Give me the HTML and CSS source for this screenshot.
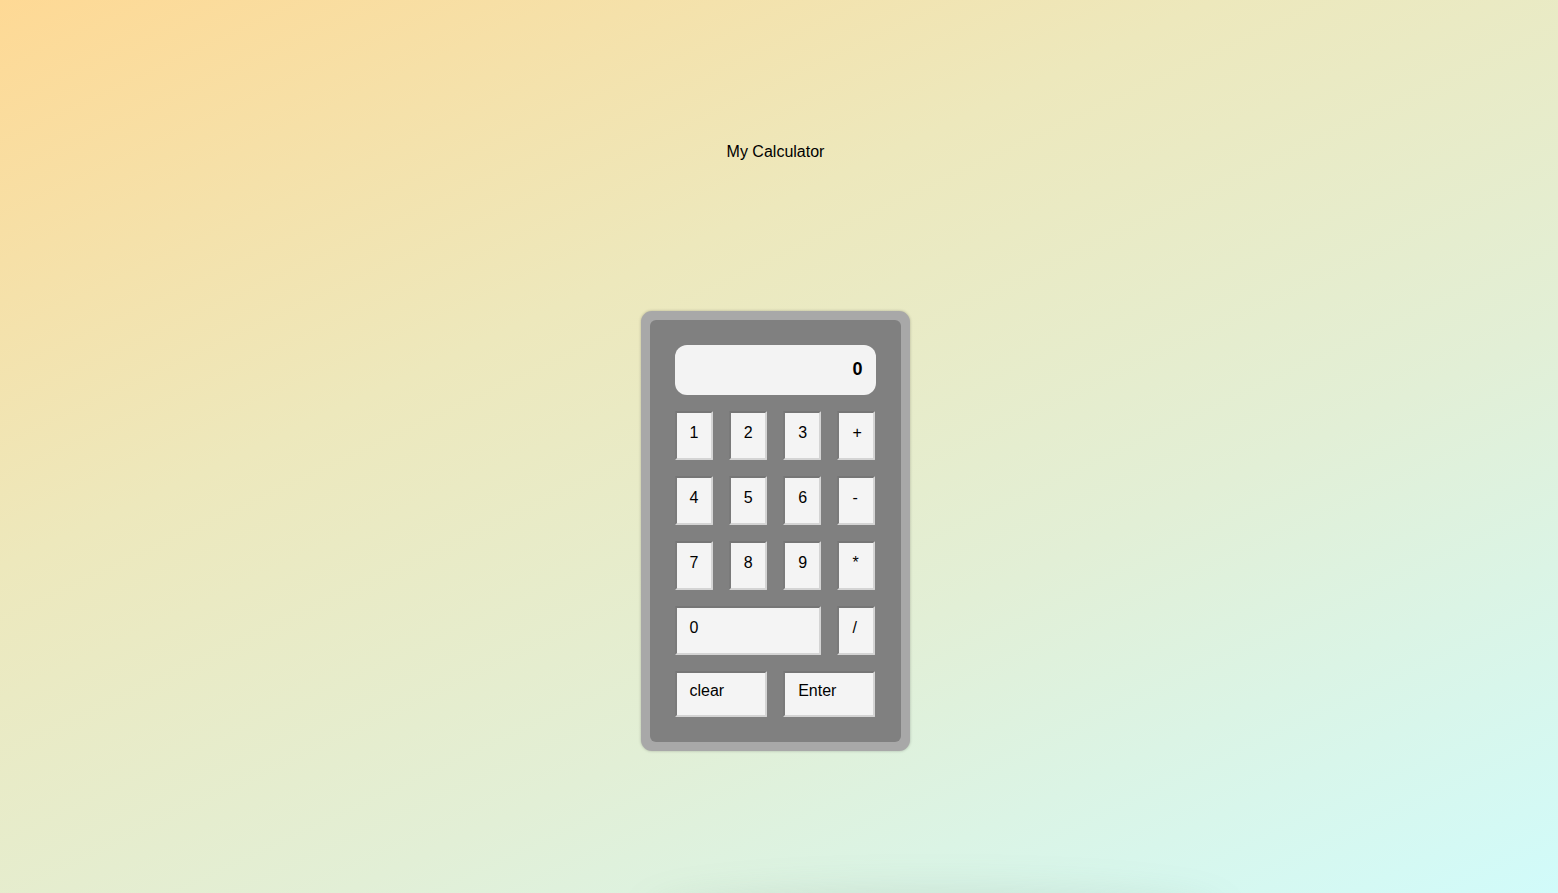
FILE: index.html
```html
<!DOCTYPE html>
<html lang="en">
<head>
<meta charset="utf-8">
<title>My Calculator</title>
<link rel="stylesheet" href="styles.css">
</head>
<body>
<main class="page">
  <h1 class="title">My Calculator</h1>
  <div class="calc">
    <div class="calc-inner">
      <div class="display">0</div>
      <div class="keys">
        <button class="key">1</button>
        <button class="key">2</button>
        <button class="key">3</button>
        <button class="key">+</button>
        <button class="key">4</button>
        <button class="key">5</button>
        <button class="key">6</button>
        <button class="key">-</button>
        <button class="key">7</button>
        <button class="key">8</button>
        <button class="key">9</button>
        <button class="key">*</button>
        <button class="key key-zero">0</button>
        <button class="key">/</button>
        <button class="key key-wide">clear</button>
        <button class="key key-wide">Enter</button>
      </div>
    </div>
  </div>
  <div class="floor-shadow"></div>
</main>
</body>
</html>
```

FILE: styles.css
```css
* { box-sizing: border-box; }
html, body {
  margin: 0;
  height: 100%;
}
body {
  background: linear-gradient(155deg, #fed995 0%, #ede8bc 35%, #e2efd6 65%, #d1fbfa 100%);
  font-family: "Liberation Sans", Arial, sans-serif;
  color: #000;
  overflow: hidden;
}
.page {
  position: relative;
  height: 893px;
  display: flex;
  flex-direction: column;
  align-items: center;
  padding-top: 143px;
  padding-right: 8px;
}
.title {
  margin: 0;
  font-size: 16px;
  font-weight: normal;
  line-height: 18px;
  padding-left: 1px;
}
.calc {
  margin-top: 150px;
  width: 269px;
  border: 9px solid #a8a8a8;
  border-radius: 11px;
  background: #a8a8a8;
  box-shadow: 0 0 3px rgba(0, 0, 0, 0.25);
}
.calc-inner {
  background: #808080;
  border-radius: 6px;
  padding: 25px;
  display: flex;
  flex-direction: column;
  gap: 16px;
}
.display {
  height: 50px;
  background: #f3f3f3;
  border-radius: 12px;
  display: flex;
  align-items: center;
  justify-content: flex-end;
  padding: 0 13px 1px 0;
  font-family: "Liberation Sans", Arial, sans-serif;
  font-weight: bold;
  font-size: 18px;
}
.keys {
  display: grid;
  grid-template-columns: repeat(4, 38px);
  grid-template-rows: repeat(4, 49px) 46px;
  gap: 16px;
  justify-content: space-between;
}
.key {
  margin: 0;
  background: #f4f4f4;
  border: 2px solid;
  border-color: #767676 #d4d4d4 #d4d4d4 #7a7a7a;
  border-radius: 1px;
  font-family: "Liberation Sans", Arial, sans-serif;
  font-size: 16px;
  color: #000;
  text-align: left;
  padding: 0 0 6px 13px;
  display: flex;
  align-items: center;
}
.key-zero { grid-column: span 3; }
.key-wide { grid-column: span 2; }
.floor-shadow {
  position: absolute;
  left: 660px;
  width: 550px;
  top: 905px;
  height: 30px;
  border-radius: 50%;
  box-shadow: 0 0 40px 12px rgba(120, 140, 110, 0.18);
}
```
